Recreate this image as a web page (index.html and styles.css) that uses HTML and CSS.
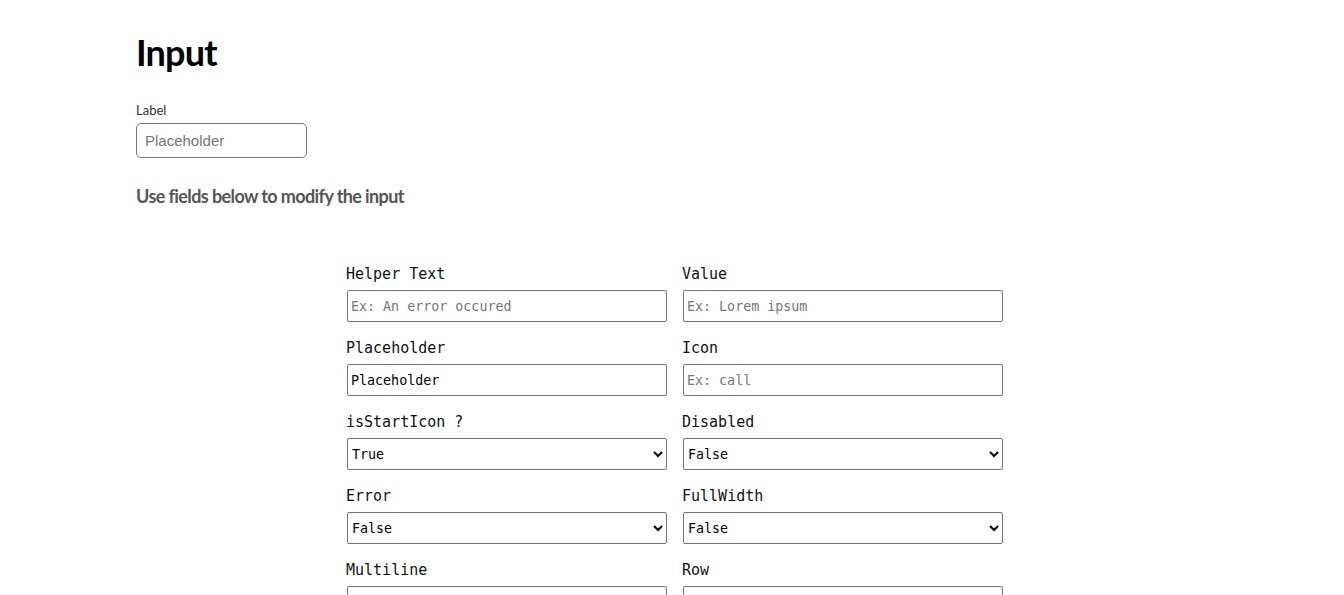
FILE: index.html
```html
<!DOCTYPE html>
<html>
<head>
<meta charset="utf-8">
<link rel="stylesheet" href="styles.css">
</head>
<body>
<main class="page">
  <h1 class="title">Input</h1>
  <div class="demo">
    <label class="demo-label">Label</label>
    <input class="demo-input" type="text" placeholder="Placeholder">
  </div>
  <h2 class="subtitle">Use fields below to modify the input</h2>
  <form class="controls">
    <div class="field">
      <label class="field-label">Helper Text</label>
      <input class="field-input" type="text" placeholder="Ex: An error occured">
    </div>
    <div class="field">
      <label class="field-label">Value</label>
      <input class="field-input" type="text" placeholder="Ex: Lorem ipsum">
    </div>
    <div class="field">
      <label class="field-label">Placeholder</label>
      <input class="field-input" type="text" value="Placeholder">
    </div>
    <div class="field">
      <label class="field-label">Icon</label>
      <input class="field-input" type="text" placeholder="Ex: call">
    </div>
    <div class="field">
      <label class="field-label">isStartIcon ?</label>
      <select class="field-input"><option>True</option><option>False</option></select>
    </div>
    <div class="field">
      <label class="field-label">Disabled</label>
      <select class="field-input"><option>False</option><option>True</option></select>
    </div>
    <div class="field">
      <label class="field-label">Error</label>
      <select class="field-input"><option>False</option><option>True</option></select>
    </div>
    <div class="field">
      <label class="field-label">FullWidth</label>
      <select class="field-input"><option>False</option><option>True</option></select>
    </div>
    <div class="field">
      <label class="field-label">Multiline</label>
      <select class="field-input"><option>False</option><option>True</option></select>
    </div>
    <div class="field">
      <label class="field-label">Row</label>
      <input class="field-input" type="text" placeholder="Ex: 3">
    </div>
  </form>
</main>
</body>
</html>
```
FILE: styles.css
```css
html, body {
  margin: 0;
  padding: 0;
  background: #fff;
}
.page {
  padding: 30px 136px 40px;
  font-family: "Lato", "Noto Sans", sans-serif;
}
.title {
  margin: 0;
  font-size: 36px;
  font-weight: 700;
  color: #000;
  line-height: 44px;
  letter-spacing: -0.8px;
}
.demo {
  margin-top: 28px;
  display: flex;
  flex-direction: column;
  align-items: flex-start;
}
.demo-label {
  font-size: 13px;
  color: #333;
  line-height: 16px;
  margin-bottom: 5px;
}
.demo-input {
  box-sizing: border-box;
  width: 171px;
  height: 35px;
  border: 1px solid #777;
  border-radius: 5px;
  padding: 0 8px;
  font-family: "Liberation Sans", Arial, sans-serif;
  font-size: 15px;
  color: #333;
}
.demo-input::placeholder { color: #777; }
.subtitle {
  margin: 26px 0 0;
  font-size: 18px;
  font-weight: 700;
  color: #555;
  line-height: 24px;
  letter-spacing: -0.6px;
}
.controls {
  margin: 57px 0 0 211px;
  display: grid;
  grid-template-columns: 320px 320px;
  column-gap: 16px;
  row-gap: 17px;
  width: 656px;
}
.field {
  display: flex;
  flex-direction: column;
}
.field-label {
  font-family: "DejaVu Sans Mono", monospace;
  font-size: 15px;
  line-height: 18px;
  color: #111;
  margin-bottom: 7px;
  margin-left: -1px;
}
.field-input {
  box-sizing: border-box;
  width: 320px;
  height: 32px;
  border: 1px solid #767676;
  border-radius: 2px;
  padding: 0 3px;
  font-family: "DejaVu Sans Mono", monospace;
  font-size: 13.33px;
  color: #000;
  background: #fff;
}
.field-input::placeholder { color: #777; }
select.field-input { padding: 0; }
```
